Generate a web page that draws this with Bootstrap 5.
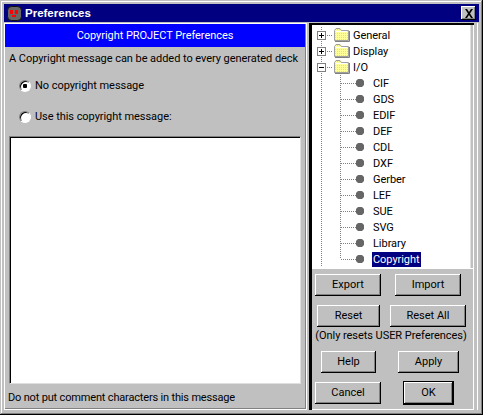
<!DOCTYPE html>
<html lang="en">
<head>
    <meta charset="UTF-8">
    <title>Preferences</title>
    <link rel="stylesheet" href="https://cdn.jsdelivr.net/npm/bootstrap@5.3.0/dist/css/bootstrap.min.css">
    <style>
        html, body { height: 100%; }
        body {
            background: #c0c0c0;
            color: #000;
            font-family: Roboto, "Liberation Sans", sans-serif;
            font-size: 11px;
            letter-spacing: -0.05px;
            line-height: 16px;
            overflow: hidden;
        }
        .dlg-window {
            width: 483px;
            height: 415px;
            padding: 4px;
            background: #c0c0c0;
            box-shadow: inset -1px -1px 0 #000, inset 1px 1px 0 #c0c0c0, inset -2px -2px 0 #808080, inset 2px 2px 0 #fff;
        }
        .dlg-title {
            height: 18px;
            background: #000080;
            color: #fff;
            font-family: "Liberation Sans", sans-serif;
            font-weight: 700;
            font-size: 11.5px;
            letter-spacing: 0;
            padding: 0 3px;
            gap: 3px;
        }
        .dlg-close {
            width: 15px;
            height: 14px;
            background: #c0c0c0;
            box-shadow: inset -1px -1px 0 #000, inset 1px 1px 0 #fff, inset -2px -2px 0 #808080;
        }
        .dlg-body {
            width: 474px;
            height: 387px;
            margin-top: 1px;
            box-shadow: inset -1px 0 0 #fff;
        }
        .pane-left {
            width: 303px;
            box-shadow: inset 1px 1px 0 #fff, inset -1px -1px 0 #fff, inset -2px -2px 0 #808080;
            padding: 1px 2px 2px 1px;
        }
        .pane-right {
            width: 165px;
            margin-left: 2px;
            box-shadow: inset 3px 0 0 #000, inset 0 2px 0 #000, inset -1px -1px 0 #fff;
            padding: 2px 0 0 3px;
        }
        .pane-head {
            height: 23px;
            background: #0000ff;
            color: #fff;
        }
        .intro-line { padding: 4px 0 0 4px; height: 23px; }
        .radio-line { padding-left: 14px; height: 31px; gap: 4px; }
        .win-radio {
            appearance: none;
            width: 12px;
            height: 12px;
            margin: 0;
            border-radius: 50%;
            background: #fff;
            border: 1px solid #808080;
            border-right-color: #fff;
            border-bottom-color: #fff;
            box-shadow: inset 1px 1px 0 #000;
        }
        .win-radio:checked { background: radial-gradient(circle at 50% 50%, #000 0 2px, #fff 2.5px); }
        .msg-box {
            display: block;
            width: 292px;
            height: 248px;
            margin: 4px 0 0 4px;
            padding: 2px;
            border-radius: 0;
            border: 1px solid #808080;
            border-right-color: #dfdfdf;
            border-bottom-color: #dfdfdf;
            box-shadow: inset 1px 1px 0 #000;
            resize: none;
        }
        .foot-note { padding: 6px 0 0 3px; letter-spacing: -0.17px; }
        .tree-pane {
            height: 243px;
            background: #fff;
            margin-right: 3px;
            padding: 2px 0 0 1px;
            overflow: hidden;
            border-right: 1px solid #dfdfdf;
        }
        .tree-row { height: 16px; white-space: nowrap; }
        .tree-row svg { display: block; flex: none; }
        .tree-text { margin: 1px 0 0 3px; line-height: 15px; }
        .leaf-text { padding: 0 1px; margin: 1px 0 0 2px; height: 15px; line-height: 15px; }
        .leaf-on { background: #000080; color: #fff; }
        .btn-area { border-top: 1px solid #fff; }
        .win-btn {
            height: 22px;
            padding: 0;
            font-size: 11px;
            line-height: 18px;
            color: #000;
            background: #c0c0c0;
            border: 0;
            border-radius: 0;
            box-shadow: inset -1px -1px 0 #000, inset 1px 1px 0 #fff, inset -2px -2px 0 #808080;
        }
        .win-btn:hover { background: #c0c0c0; color: #000; }
        .btn-ok { box-shadow: 0 0 0 1px #000, inset -1px -1px 0 #000, inset 1px 1px 0 #fff, inset -2px -2px 0 #808080; }
        .btn-row { display: flex; height: 22px; }
        .row-a { margin: 5px 0 0 3px; gap: 14px; }
        .row-b { margin: 9px 0 0 5px; gap: 10px; }
        .row-c { margin: 7px 0 0 9px; gap: 22px; }
        .row-d { margin: 9px 0 0 3px; gap: 23px; }
        .w-66 { width: 66px; }
        .w-63 { width: 63px; }
        .w-76 { width: 76px; }
        .w-55 { width: 55px; }
        .w-61 { width: 61px; }
        .w-49 { width: 49px; }
        .reset-note { text-align: center; height: 16px; margin: 1px 4px 0 0; white-space: nowrap; }
    </style>
</head>
<body class="m-0">
    <svg width="0" height="0" class="position-absolute">
        <defs>
            <pattern id="dots" width="2" height="2" patternUnits="userSpaceOnUse">
                <rect width="2" height="2" fill="#ffff99"/>
                <rect width="1" height="1" fill="#e8e070"/>
            </pattern>
            <symbol id="folder" viewBox="0 0 17 15">
                <path d="M1.5 3.5 L3 1.5 H7 L8.5 3.5 H15.5 V13.5 H1.5 Z" fill="url(#dots)" stroke="#a0a0a0"/>
                <path d="M2 14.5 H16.5 V4" fill="none" stroke="#808080"/>
                <path d="M2.5 4.5 H14.5" stroke="#fff"/>
            </symbol>
            <symbol id="leaf" viewBox="0 0 57 16">
                <path d="M8.5 0 V16 M27.5 0 V16 M28 8.5 H43" stroke="#808080" stroke-dasharray="1 1" fill="none"/>
                <path d="M45 4 H49 L51 6 V10 L49 12 H45 L43 10 V6 Z" fill="#666"/>
            </symbol>
            <symbol id="leaf-last" viewBox="0 0 57 16">
                <path d="M8.5 0 V16 M27.5 0 V8 M28 8.5 H43" stroke="#808080" stroke-dasharray="1 1" fill="none"/>
                <path d="M45 4 H49 L51 6 V10 L49 12 H45 L43 10 V6 Z" fill="#666"/>
            </symbol>
        </defs>
    </svg>

    <div class="dlg-window">
        <div class="dlg-title d-flex align-items-center">
            <svg width="15" height="15" viewBox="0 0 15 15" class="flex-shrink-0">
                <rect x="0.5" y="0.5" width="14" height="14" rx="4" fill="#666" stroke="#111"/>
                <rect x="3" y="4" width="3" height="4" fill="#f00"/>
                <rect x="8" y="4" width="3" height="4" fill="#f00"/>
                <rect x="5" y="9" width="4" height="2" fill="#f00"/>
            </svg>
            <span class="flex-grow-1">Preferences</span>
            <div class="dlg-close d-flex align-items-center justify-content-center">
                <svg width="10" height="9" viewBox="0 0 10 9">
                    <path d="M1 0 H3 L5 3 L7 0 H9 L6 4.5 L9 9 H7 L5 6 L3 9 H1 L4 4.5 Z" fill="#000"/>
                </svg>
            </div>
        </div>

        <div class="dlg-body d-flex">
            <div class="pane-left">
                <div class="pane-head d-flex align-items-center justify-content-center">Copyright PROJECT Preferences</div>
                <div class="intro-line">A Copyright message can be added to every generated deck</div>
                <label class="radio-line d-flex align-items-center">
                    <input type="radio" name="copyright" class="win-radio" checked>
                    <span>No copyright message</span>
                </label>
                <label class="radio-line d-flex align-items-center">
                    <input type="radio" name="copyright" class="win-radio">
                    <span>Use this copyright message:</span>
                </label>
                <textarea class="msg-box form-control"></textarea>
                <div class="foot-note">Do not put comment characters in this message</div>
            </div>

            <div class="pane-right">
                <div class="tree-pane">
                    <div class="tree-row d-flex">
                        <svg width="37" height="16" viewBox="0 0 37 16">
                            <path d="M8.5 0 V16 M14 8.5 H20" stroke="#808080" stroke-dasharray="1 1"/>
                            <rect x="4.5" y="4.5" width="8" height="8" fill="#fff" stroke="#808080"/>
                            <path d="M6 8.5 H11 M8.5 6 V11" stroke="#000"/>
                            <use href="#folder" x="20" y="0" width="17" height="15"/>
                        </svg>
                        <span class="tree-text">General</span>
                    </div>
                    <div class="tree-row d-flex">
                        <svg width="37" height="16" viewBox="0 0 37 16">
                            <path d="M8.5 0 V16 M14 8.5 H20" stroke="#808080" stroke-dasharray="1 1"/>
                            <rect x="4.5" y="4.5" width="8" height="8" fill="#fff" stroke="#808080"/>
                            <path d="M6 8.5 H11 M8.5 6 V11" stroke="#000"/>
                            <use href="#folder" x="20" y="0" width="17" height="15"/>
                        </svg>
                        <span class="tree-text">Display</span>
                    </div>
                    <div class="tree-row d-flex">
                        <svg width="37" height="16" viewBox="0 0 37 16">
                            <path d="M8.5 0 V16 M14 8.5 H20" stroke="#808080" stroke-dasharray="1 1"/>
                            <rect x="4.5" y="4.5" width="8" height="8" fill="#fff" stroke="#808080"/>
                            <path d="M6 8.5 H11" stroke="#000"/>
                            <use href="#folder" x="20" y="0" width="17" height="15"/>
                        </svg>
                        <span class="tree-text">I/O</span>
                    </div>
                    <div class="tree-row d-flex"><svg width="57" height="16"><use href="#leaf"/></svg><span class="leaf-text">CIF</span></div>
                    <div class="tree-row d-flex"><svg width="57" height="16"><use href="#leaf"/></svg><span class="leaf-text">GDS</span></div>
                    <div class="tree-row d-flex"><svg width="57" height="16"><use href="#leaf"/></svg><span class="leaf-text">EDIF</span></div>
                    <div class="tree-row d-flex"><svg width="57" height="16"><use href="#leaf"/></svg><span class="leaf-text">DEF</span></div>
                    <div class="tree-row d-flex"><svg width="57" height="16"><use href="#leaf"/></svg><span class="leaf-text">CDL</span></div>
                    <div class="tree-row d-flex"><svg width="57" height="16"><use href="#leaf"/></svg><span class="leaf-text">DXF</span></div>
                    <div class="tree-row d-flex"><svg width="57" height="16"><use href="#leaf"/></svg><span class="leaf-text">Gerber</span></div>
                    <div class="tree-row d-flex"><svg width="57" height="16"><use href="#leaf"/></svg><span class="leaf-text">LEF</span></div>
                    <div class="tree-row d-flex"><svg width="57" height="16"><use href="#leaf"/></svg><span class="leaf-text">SUE</span></div>
                    <div class="tree-row d-flex"><svg width="57" height="16"><use href="#leaf"/></svg><span class="leaf-text">SVG</span></div>
                    <div class="tree-row d-flex"><svg width="57" height="16"><use href="#leaf"/></svg><span class="leaf-text">Library</span></div>
                    <div class="tree-row d-flex"><svg width="57" height="16"><use href="#leaf-last"/></svg><span class="leaf-text leaf-on">Copyright</span></div>
                </div>
                <div class="btn-area">
                    <div class="btn-row row-a">
                        <button type="button" class="btn win-btn w-66">Export</button>
                        <button type="button" class="btn win-btn w-66">Import</button>
                    </div>
                    <div class="btn-row row-b">
                        <button type="button" class="btn win-btn w-63">Reset</button>
                        <button type="button" class="btn win-btn w-76">Reset All</button>
                    </div>
                    <div class="reset-note">(Only resets USER Preferences)</div>
                    <div class="btn-row row-c">
                        <button type="button" class="btn win-btn w-55">Help</button>
                        <button type="button" class="btn win-btn w-61">Apply</button>
                    </div>
                    <div class="btn-row row-d">
                        <button type="button" class="btn win-btn w-66">Cancel</button>
                        <button type="button" class="btn win-btn btn-ok w-49">OK</button>
                    </div>
                </div>
            </div>
        </div>
    </div>
    <script src="https://cdn.jsdelivr.net/npm/bootstrap@5.3.0/dist/js/bootstrap.bundle.min.js"></script>
</body>
</html>
